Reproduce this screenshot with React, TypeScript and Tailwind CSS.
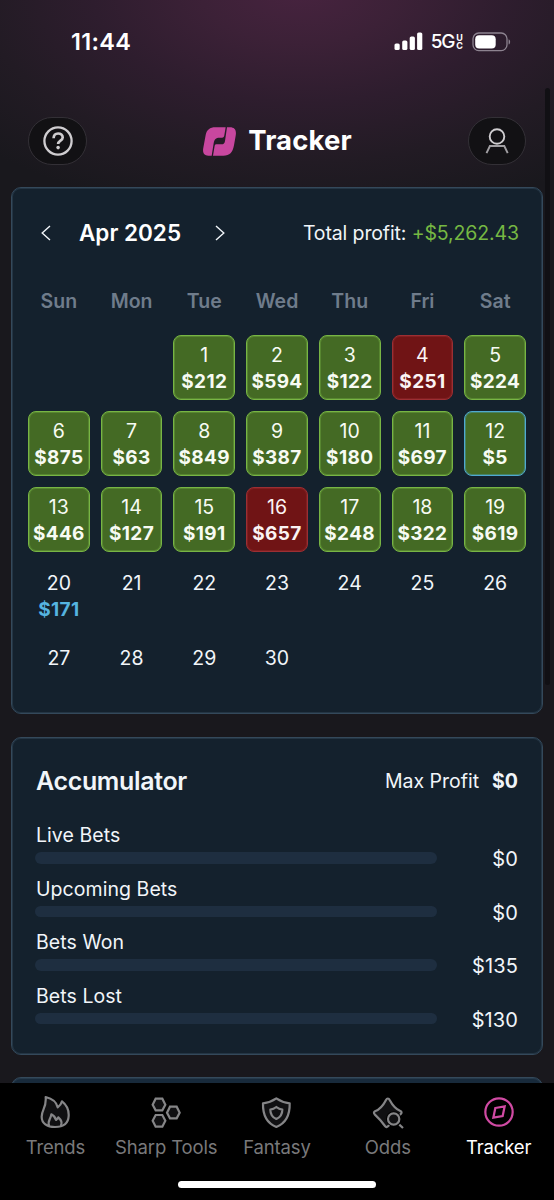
import type { ReactNode } from "react";

type Kind = "win" | "loss" | "today" | "plain";
interface Day {
  day?: number;
  amount?: string;
  kind: Kind;
}

const w = (day: number, amount: string, kind: Kind = "win"): Day => ({ day, amount, kind });
const p = (day: number): Day => ({ day, kind: "plain" });
const empty: Day = { kind: "plain" };

const weeks: Day[][] = [
  [empty, empty, w(1, "$212"), w(2, "$594"), w(3, "$122"), w(4, "$251", "loss"), w(5, "$224")],
  [w(6, "$875"), w(7, "$63"), w(8, "$849"), w(9, "$387"), w(10, "$180"), w(11, "$697"), w(12, "$5", "today")],
  [w(13, "$446"), w(14, "$127"), w(15, "$191"), w(16, "$657", "loss"), w(17, "$248"), w(18, "$322"), w(19, "$619")],
  [w(20, "$171", "plain"), p(21), p(22), p(23), p(24), p(25), p(26)],
  [p(27), p(28), p(29), p(30), empty, empty, empty],
];

const kindClass: Record<Kind, string> = {
  win: "bg-[#446a24] border-[#78b544] shadow-[inset_0_0_0_1px_#78b54460] text-[#f7fbf3]",
  loss: "bg-[#701415] border-[#9c2f33] shadow-[inset_0_0_0_1px_#9c2f3360] text-[#fbf3f3]",
  today: "bg-[#446a24] border-[#4fa9d0] shadow-[inset_0_0_0_1px_#4fa9d060] text-[#f7fbf3]",
  plain: "border-transparent text-[#f1f5f9]",
};

const card = "shrink-0 rounded-[10px] border border-[#34495b] shadow-[inset_0_0_0_1px_#34495b80]";

function DayCell({ day, amount, kind }: Day) {
  return (
    <div className={`flex h-[65px] flex-col items-center rounded-lg border pt-[6px] ${kindClass[kind]}`}>
      <span className="text-[19.5px] leading-[27px]">{day}</span>
      <span
        className={`text-[19px] font-bold leading-[26px] tracking-[0.35px] ${kind === "plain" ? "text-[#55b4e0]" : ""}`}
      >
        {amount}
      </span>
    </div>
  );
}

function Chevron({ flip = false }: { flip?: boolean }) {
  return (
    <svg width="10" height="16" viewBox="0 0 10 16" fill="none" stroke="#f1f5f9" strokeWidth="1.4" className={flip ? "-scale-x-100" : ""}>
      <path d="M9 1 1.2 8 9 15" />
    </svg>
  );
}

function StatusBar() {
  return (
    <div className="flex h-[83px] shrink-0 items-center justify-between pl-[71px] pr-[43px] text-white">
      <span className="text-[23.5px] font-semibold tracking-[0.3px]">11:44</span>
      <div className="flex items-center">
        <svg width="29" height="19" viewBox="0 0 29 19" fill="white">
          <rect x="0.5" y="11.5" width="5.2" height="6.5" rx="1.6" />
          <rect x="8.2" y="8.5" width="5.2" height="9.5" rx="1.6" />
          <rect x="15.7" y="4.5" width="5.2" height="13.5" rx="1.6" />
          <rect x="23.1" y="0.5" width="5.2" height="17.5" rx="1.6" />
        </svg>
        <span className="ml-[8px] text-[19px] font-medium leading-none tracking-[-1.2px]">5G</span>
        <span className="ml-[2px] flex flex-col pt-px text-[9px] font-bold">
          <span className="h-[8px] leading-[8px]">U</span>
          <span className="h-[8px] leading-[8px]">C</span>
        </span>
        <svg width="39" height="20" viewBox="0 0 39 20" className="ml-[9px]" fill="none">
          <rect x="1" y="1" width="34" height="17.6" rx="5.8" stroke="#8d8390" strokeWidth="1.3" />
          <rect x="3.2" y="3.2" width="20.5" height="13.2" rx="4" fill="white" />
          <path d="M36.600 7.200c2 .9 2 4.500 0 5.400z" fill="#8d8390" />
        </svg>
      </div>
    </div>
  );
}

function Header() {
  return (
    <div className="flex h-[104px] shrink-0 items-center justify-between pl-[28px] pr-[28px] pt-[12px]">
      <div className="flex h-[48px] w-[59px] items-center justify-center rounded-[24px] border border-[#333036] bg-[#121114]">
        <svg width="30" height="30" viewBox="0 0 30 30" fill="none" stroke="#cfcdd0" strokeWidth="2.3">
          <circle cx="15" cy="15" r="13.6" />
          <path d="M10.600 12.200c.1-3 2-4.700 4.500-4.700 2.600 0 4.600 1.600 4.600 4 0 3.100-4.600 3.200-4.600 6.600" strokeWidth="2.700" />
          <circle cx="15.100" cy="21.600" r="1.800" fill="#cfcdd0" stroke="none" />
        </svg>
      </div>
      <div className="flex items-center gap-[12px]">
        <svg width="33" height="29" viewBox="0 0 99 87" fill="#c8479f">
          <path d="M68 1H37C21 1 11 9 8 24L1 62c-3 15 2 24 15 24h10l6-37c2-12 7-17 17-17h8c5 0 6-2 7-7z" />
          <path d="M72 1h9c14 0 20 9 17 25l-5 29C89 77 80 86 61 86H30l5-30c1-3 3-4 6-4h14c7 0 10-3 11-10z" />
        </svg>
        <span className="text-[27.500px] font-bold tracking-[0.1px] text-white">Tracker</span>
      </div>
      <div className="flex h-[48px] w-[58px] items-center justify-center rounded-[24px] border border-[#333036] bg-[#121114]">
        <svg width="26" height="26" viewBox="0 0 26 26" fill="none" strokeWidth="1.900">
          <circle cx="13" cy="8.500" r="7.300" stroke="#cfcdd0" />
          <path d="M2.500 25.200 5.900 18h14.400l3.400 7.200" stroke="#a19fa3" />
        </svg>
      </div>
    </div>
  );
}

function Calendar() {
  return (
    <section className={`h-[527px] bg-[#14212d] px-[16px] ${card}`}>
      <div className="flex h-[90px] items-center justify-between pl-[13px] pr-[7px]">
        <div className="flex items-center">
          <Chevron />
          <span className="ml-[28px] w-[103px] whitespace-nowrap text-[22.500px] font-semibold text-white">Apr 2025</span>
          <span className="ml-[33px]">
            <Chevron flip />
          </span>
        </div>
        <div className="whitespace-nowrap pt-[2px] text-[19.500px] tracking-[-0.12px] text-[#f1f5f9]">
          Total profit: <span className="text-[#76b843]">+$5,262.43</span>
        </div>
      </div>
      <div className="grid h-[57px] grid-cols-7 gap-x-[11px] pt-[9px] text-center text-[19.500px] font-semibold leading-[28px] tracking-[0px] text-[#6f7c8b]">
        {["Sun", "Mon", "Tue", "Wed", "Thu", "Fri", "Sat"].map((d) => (
          <span key={d}>{d}</span>
        ))}
      </div>
      <div className="grid grid-cols-7 gap-[11px]">
        {weeks.flat().map((d, i) => (
          <div key={i} className={i >= 28 ? "-mt-px" : ""}>
            <DayCell {...d} />
          </div>
        ))}
      </div>
    </section>
  );
}

const bets = [
  ["Live Bets", "$0"],
  ["Upcoming Bets", "$0"],
  ["Bets Won", "$135"],
  ["Bets Lost", "$130"],
];

function Accumulator() {
  return (
    <section className={`mt-[23px] h-[318px] bg-[#14212d] pl-[23px] pr-[24px] text-[#f1f5f9] ${card}`}>
      <div className="flex h-[84px] items-center justify-between pl-px pt-[3px]">
        <h2 className="text-[25px] font-semibold tracking-[-0.35px]">Accumulator</h2>
        <div className="flex gap-[13px] text-[19.500px] tracking-[0px]">
          <span>Max Profit</span>
          <span className="font-bold">$0</span>
        </div>
      </div>
      {bets.map(([label, value]) => (
        <div key={label} className="h-[53.500px]">
          <div className="h-[24px] pl-px text-[19.500px] leading-[26px] tracking-[0.06px]">{label}</div>
          <div className="flex h-[24px] items-center justify-between">
            <div className="h-[11.500px] w-[402px] rounded-full bg-[#1e2e40]" />
            <span className="pt-[2px] text-[20px] leading-[24px] tracking-[0.1px]">{value}</span>
          </div>
        </div>
      ))}
    </section>
  );
}

function NavItem({ label, active = false, children }: { label: string; active?: boolean; children: ReactNode }) {
  return (
    <div className={`flex flex-col items-center ${active ? "text-white" : "text-[#79797b]"}`}>
      <div className={`flex h-[34px] items-center ${active ? "text-[#d04aa3]" : "text-[#858587]"}`}>{children}</div>
      <span className="mt-[5px] whitespace-nowrap text-[18.500px] leading-[26px] tracking-[-0.15px]">{label}</span>
    </div>
  );
}

function Nav() {
  const svg = { fill: "#101012", stroke: "currentColor", strokeWidth: 6.6, strokeLinejoin: "round", strokeLinecap: "round" } as const;
  return (
    <nav className="h-[117px] shrink-0 bg-black pt-[12px]">
      <div className="grid grid-cols-5">
        <NavItem label="Trends">
          <svg width="30" height="34" viewBox="0 0 90 102" {...svg}>
            <path d="M17 6c17 4 32 13 36 31 6-4 11-10 13-18 13 10 21 25 20 44-1 22-16 33-41 33C21 96 5 85 5 65c0-21 15-27 12-59z" />
            <path d="M27 91c-5-12 5-19 7-33 8 4 12 10 14 17 3-2 5-4 7-8 8 7 12 16 8 24" />
          </svg>
        </NavItem>
        <NavItem label="Sharp Tools">
          <svg width="30" height="31" viewBox="0 0 90 93" {...svg} strokeLinejoin="miter">
            <path d="M14 5h20l9 18-9 17H14L5 23z" />
            <path d="M14 54h20l9 17-9 18H14L5 71z" />
            <path d="M57 29h20l9 18-9 17H57l-9-17z" />
          </svg>
        </NavItem>
        <NavItem label="Fantasy">
          <svg width="31" height="33" viewBox="0 0 93 99" {...svg}>
            <path d="M46 7c12 8 25 13 40 15 1 36-12 60-40 71C18 82 5 58 6 22c15-2 28-7 40-15z" />
            <path d="M46 33c5 4 11 7 18 8 0 13-5 22-18 28-13-6-18-15-18-28 7-1 13-4 18-8z" />
          </svg>
        </NavItem>
        <NavItem label="Odds">
          <svg width="33" height="33" viewBox="0 0 99 99" {...svg}>
            <path d="M42 90C35 80 24 67 11 55c-3-3-3-7 1-9 15-6 24-16 33-34 3-6 8-6 11 0 9 17 17 27 32 33 4 2 5 5 2 8L51 91c-3 3-6 3-9-1z" />
            <circle cx="68" cy="69" r="17" fill="#000" stroke="#000" strokeWidth="12" />
            <circle cx="68" cy="69" r="17" />
            <path d="M85 86 96 96" strokeLinecap="butt" />
          </svg>
        </NavItem>
        <NavItem label="Tracker" active>
          <svg width="30" height="30" viewBox="0 0 90 90" {...svg} fill="none" strokeLinejoin="miter">
            <circle cx="45" cy="45" r="41" />
            <path d="m34 33 28-5-6 29-28 5z" />
          </svg>
        </NavItem>
      </div>
      <div className="mx-auto mt-[21px] h-[7px] w-[198px] rounded-full bg-white" />
    </nav>
  );
}

export default function App() {
  return (
    <div className="relative flex h-[1200px] w-[554px] flex-col overflow-hidden bg-[#19181d] bg-[radial-gradient(ellipse_400px_215px_at_300px_-10px,#47233f_0%,#3c2137_25%,#2e1d2e_52%,#221b24_80%,#19181d_108%)] font-['Inter',sans-serif]">
      <div className="absolute right-[4px] top-[88px] h-[597px] w-[5px] rounded-full bg-[#111014]" />
      <StatusBar />
      <Header />
      <main className="flex min-h-0 flex-1 flex-col overflow-hidden pl-[11px] pr-[11px]">
        <Calendar />
        <Accumulator />
        <section className={`mt-[22px] h-[60px] bg-[#182a3b] ${card}`} />
      </main>
      <Nav />
    </div>
  );
}
